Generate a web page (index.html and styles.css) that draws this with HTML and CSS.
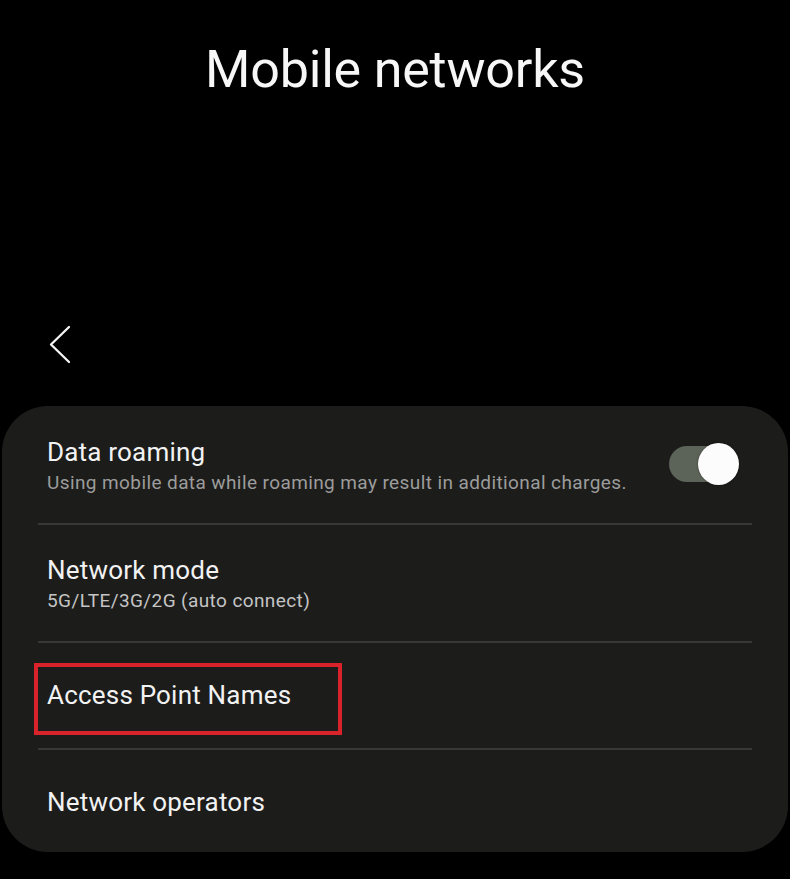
FILE: index.html
```html
<!DOCTYPE html>
<html lang="en">
<head>
<meta charset="utf-8">
<title>Mobile networks</title>
<link rel="stylesheet" href="styles.css">
</head>
<body>
<div class="screen">
  <header class="header">
    <h1 class="title">Mobile networks</h1>
    <button class="back" aria-label="Back">
      <svg width="30" height="46" viewBox="0 0 30 46"><polyline points="25,5 7,22.5 25,40" fill="none" stroke="#f4f4f4" stroke-width="2.3" stroke-linecap="round" stroke-linejoin="round"/></svg>
    </button>
  </header>
  <section class="card">
    <div class="row row-first">
      <div class="texts">
        <div class="label">Data roaming</div>
        <div class="summary">Using mobile data while roaming may result in additional charges.</div>
      </div>
      <div class="toggle"><span class="knob"></span></div>
    </div>
    <div class="divider"></div>
    <div class="row">
      <div class="texts">
        <div class="label">Network mode</div>
        <div class="summary value">5G/LTE/3G/2G (auto connect)</div>
      </div>
    </div>
    <div class="divider"></div>
    <div class="row row-single highlighted">
      <div class="label">Access Point Names</div>
      <span class="mark"></span>
    </div>
    <div class="divider"></div>
    <div class="row row-single">
      <div class="label">Network operators</div>
    </div>
  </section>
</div>
</body>
</html>
```
FILE: styles.css
```css
html, body {
  margin: 0;
  padding: 0;
  background: #000;
}
body {
  font-family: Roboto, "Noto Sans", "Liberation Sans", sans-serif;
  color: #f2f2f2;
  width: 790px;
  height: 879px;
  overflow: hidden;
}
.screen {
  display: flex;
  flex-direction: column;
}
.header {
  height: 406px;
  box-sizing: border-box;
  padding-top: 39px;
  display: flex;
  flex-direction: column;
}
.title {
  margin: 0;
  font-size: 52px;
  line-height: 62px;
  font-weight: 400;
  text-align: center;
  color: #f7f7f7;
  letter-spacing: -0.2px;
}
.back {
  margin: 221px 0 0 44px;
  padding: 0;
  width: 30px;
  height: 46px;
  border: 0;
  background: transparent;
  display: block;
}
.back svg { display: block; }
.card {
  margin: 0 2px;
  height: 446px;
  box-sizing: border-box;
  background: #1c1c1b;
  border-radius: 46px;
  padding-top: 1px;
}
.row {
  position: relative;
  display: flex;
  align-items: center;
  padding: 30px 49px 28px 45px;
}
.row-single {
  padding-top: 37px;
  padding-bottom: 38px;
}
.texts {
  flex: 1;
  min-width: 0;
}
.label {
  font-size: 26px;
  line-height: 30px;
  letter-spacing: 0.2px;
  color: #f2f2f2;
}
.summary {
  margin-top: 4px;
  font-size: 19px;
  line-height: 24px;
  letter-spacing: 0.4px;
  color: #9c9c9c;
  white-space: nowrap;
}
.summary.value {
  color: #c4c4c4;
}
.divider {
  height: 2px;
  margin: 0 36px;
  background: #383837;
}
.toggle {
  position: relative;
  width: 70px;
  height: 42px;
  flex: none;
  margin-top: -4px;
}
.toggle::before {
  content: "";
  position: absolute;
  left: 0;
  top: 3px;
  width: 64px;
  height: 36px;
  border-radius: 18px;
  background: #5c6459;
}
.knob {
  position: absolute;
  right: 0;
  top: 0;
  width: 41px;
  height: 42px;
  border-radius: 50%;
  background: #fcfcfc;
  box-shadow: 0 0 2px rgba(0,0,0,0.5);
}
.mark {
  position: absolute;
  left: 32px;
  top: 20px;
  width: 308px;
  height: 72px;
  box-sizing: border-box;
  border: 4px solid #d9232b;
}
```
